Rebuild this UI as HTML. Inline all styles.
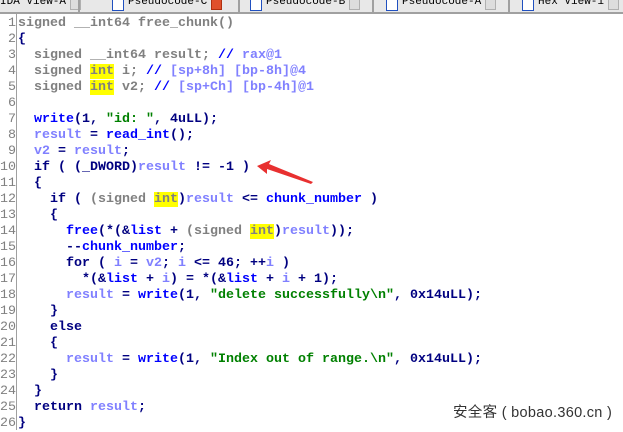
<!DOCTYPE html><html><head><style>
body{margin:0;width:623px;height:430px;background:#fff;overflow:hidden;position:relative;font-family:"Liberation Mono",monospace;}
.tabs{position:absolute;left:0;top:0;width:623px;height:12px;background:#e8e8e8;border-bottom:2px solid #a0a0a0;font-size:11px;line-height:11px;overflow:hidden;white-space:nowrap}
.tab{position:absolute;top:-3px;height:14px;color:#000}
.sep{position:absolute;top:0;width:2px;height:12px;background:#a0a0a0}
.x{display:inline-block;width:9px;height:9px;border:1px solid #b0b0b0;background:#ddd;vertical-align:top;margin-left:4px;margin-top:2px}
.xr{background:#e0502c;border-color:#b03010}
.ic{display:inline-block;width:10px;height:10px;border:1px solid #2050c0;background:#fff;vertical-align:top;margin-right:4px;margin-top:2px}
.gut{position:absolute;left:0;top:14px;width:16px;border-right:1px solid #a0a0a0;height:416px}
.code{position:absolute;left:0;top:16px;font-size:13.33px;line-height:16px;font-weight:bold;white-space:pre;color:#000080}
.n{display:inline-block;width:16px;text-align:right;color:#808080;font-weight:normal;margin-right:2px}
.g{color:#808080}.v{color:#8080ff}.f{color:#0000ff}.s{color:#008000}.h{background:#ffff00;color:#808080}.c{color:#0000ff}
</style></head><body>
<div class="tabs">
<span class="tab" style="left:0">IDA View-A<span class="x"></span></span>
<div class="sep" style="left:78px"></div>
<span class="tab" style="left:112px"><span class="ic"></span>Pseudocode-C<span class="x xr"></span></span>
<div class="sep" style="left:238px"></div>
<span class="tab" style="left:250px"><span class="ic"></span>Pseudocode-B<span class="x"></span></span>
<div class="sep" style="left:372px"></div>
<span class="tab" style="left:386px"><span class="ic"></span>Pseudocode-A<span class="x"></span></span>
<div class="sep" style="left:508px"></div>
<span class="tab" style="left:522px"><span class="ic"></span>Hex View-1<span class="x"></span></span>
</div>
<div class="gut"></div>
<div class="code"><span class="n">1</span><span class="g">signed __int64 free_chunk()</span>
<span class="n">2</span>{
<span class="n">3</span>  <span class="g">signed __int64 result;</span> <span class="c">// </span><span class="v">rax@1</span>
<span class="n">4</span>  <span class="g">signed </span><span class="h">int</span><span class="g"> i;</span> <span class="c">// </span><span class="v">[sp+8h] [bp-8h]@4</span>
<span class="n">5</span>  <span class="g">signed </span><span class="h">int</span><span class="g"> v2;</span> <span class="c">// </span><span class="v">[sp+Ch] [bp-4h]@1</span>
<span class="n">6</span>
<span class="n">7</span>  <span class="f">write</span>(1, <span class="s">"id: "</span>, 4uLL);
<span class="n">8</span>  <span class="v">result</span> = <span class="f">read_int</span>();
<span class="n">9</span>  <span class="v">v2</span> = <span class="v">result</span>;
<span class="n">10</span>  if ( (_DWORD)<span class="v">result</span> != -1 )
<span class="n">11</span>  {
<span class="n">12</span>    if ( <span class="g">(signed </span><span class="h">int</span>)<span class="v">result</span> &lt;= <span class="f">chunk_number</span> )
<span class="n">13</span>    {
<span class="n">14</span>      <span class="f">free</span>(*(&amp;<span class="f">list</span> + <span class="g">(signed </span><span class="h">int</span>)<span class="v">result</span>));
<span class="n">15</span>      --<span class="f">chunk_number</span>;
<span class="n">16</span>      for ( <span class="v">i</span> = <span class="v">v2</span>; <span class="v">i</span> &lt;= 46; ++<span class="v">i</span> )
<span class="n">17</span>        *(&amp;<span class="f">list</span> + <span class="v">i</span>) = *(&amp;<span class="f">list</span> + <span class="v">i</span> + 1);
<span class="n">18</span>      <span class="v">result</span> = <span class="f">write</span>(1, <span class="s">"delete successfully\n"</span>, 0x14uLL);
<span class="n">19</span>    }
<span class="n">20</span>    else
<span class="n">21</span>    {
<span class="n">22</span>      <span class="v">result</span> = <span class="f">write</span>(1, <span class="s">"Index out of range.\n"</span>, 0x14uLL);
<span class="n">23</span>    }
<span class="n">24</span>  }
<span class="n">25</span>  return <span class="v">result</span>;
<span class="n">26</span>}</div>
<svg style="position:absolute;left:255px;top:160px" width="60" height="25"><polygon points="2,6 16,0 14,4 58,22 56,24 12,9 12,14" fill="#e83030"/></svg>
<div style="position:absolute;left:453px;top:401px;font-family:'Liberation Sans','Noto Sans CJK SC',sans-serif;font-size:14.5px;color:#333;letter-spacing:0.3px">安全客 ( bobao.360.cn )</div>
</body></html>
